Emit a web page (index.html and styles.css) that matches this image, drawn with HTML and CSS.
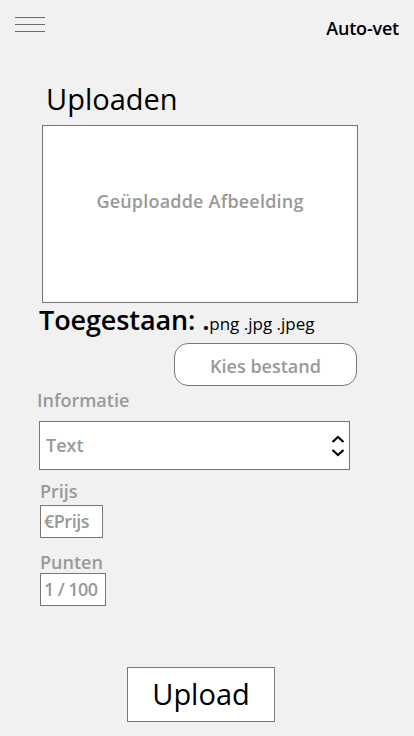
FILE: index.html
```html
<!DOCTYPE html>
<html lang="nl">
<head>
<meta charset="utf-8">
<title>Auto-vet</title>
<link rel="stylesheet" href="styles.css">
</head>
<body>
<header class="topbar">
  <div class="hamburger"><span></span><span></span><span></span></div>
  <div class="brand">Auto-vet</div>
</header>
<main class="page">
  <h1 class="title">Uploaden</h1>
  <div class="preview">Geüploadde Afbeelding</div>
  <p class="allowed"><span class="allowed-label">Toegestaan:</span> <span class="allowed-types"><b class="dot">.</b>png .jpg .jpeg</span></p>
  <button class="choose">Kies bestand</button>
  <div class="label label-info">Informatie</div>
  <div class="select">
    <span class="select-text">Text</span>
    <svg class="chevrons" width="14" height="22" viewBox="0 0 14 22">
      <path d="M1.5 7 L7 2 L12.5 7" fill="none" stroke="#000" stroke-width="2.2"/>
      <path d="M1.5 15 L7 20 L12.5 15" fill="none" stroke="#000" stroke-width="2.2"/>
    </svg>
  </div>
  <div class="label label-small">Prijs</div>
  <div class="input input-prijs">€Prijs</div>
  <div class="label label-small label-punten">Punten</div>
  <div class="input input-punten">1 / 100</div>
  <button class="upload">Upload</button>
</main>
</body>
</html>
```
FILE: styles.css
```css
* { box-sizing: border-box; }
html, body { margin: 0; padding: 0; }
body {
  background: #f1f1f1;
  font-family: "Open Sans", "Noto Sans", sans-serif;
  color: #000;
  width: 414px;
  height: 736px;
  overflow: hidden;
}
.topbar {
  display: flex;
  justify-content: space-between;
  align-items: flex-start;
  padding: 17px 15px 0 15px;
  height: 37px;
}
.hamburger {
  width: 30px;
  height: 15px;
  display: flex;
  flex-direction: column;
  justify-content: space-between;
}
.hamburger span {
  display: block;
  height: 1px;
  background: #6a6a6a;
}
.brand {
  font-size: 18px;
  font-weight: 600;
  line-height: 20px;
  letter-spacing: -0.2px;
  margin-top: 1px;
}
.page {
  display: flex;
  flex-direction: column;
  align-items: flex-start;
}
.title {
  margin: 45px 0 0 46px;
  font-size: 29px;
  font-weight: 400;
  line-height: 34px;
}
.preview {
  margin: 9px 0 0 42px;
  width: 316px;
  height: 178px;
  background: #fff;
  border: 1px solid #777;
  display: flex;
  align-items: center;
  justify-content: center;
  color: #999;
  font-size: 18px;
  font-weight: 600;
  letter-spacing: 0.2px;
  padding-bottom: 26px;
}
.allowed {
  margin: 2px 0 0 39px;
  height: 30px;
  line-height: 30px;
  white-space: nowrap;
  display: flex;
  align-items: baseline;
  gap: 7px;
}
.allowed-label {
  font-size: 27px;
  font-weight: 600;
  letter-spacing: -0.1px;
}
.allowed-types {
  font-size: 17px;
  font-weight: 400;
}
.dot { font-size: 24px; font-weight: 700; line-height: 0; }
.choose {
  margin: 8px 0 0 174px;
  width: 183px;
  height: 43px;
  border: 1px solid #777;
  border-radius: 14px;
  background: #fff;
  color: #999;
  font-family: inherit;
  font-size: 18px;
  font-weight: 600;
  padding: 3px 0 0 0;
}
.label {
  color: #999;
  font-size: 18px;
  font-weight: 600;
}
.label-info {
  margin: 2px 0 0 37px;
  line-height: 24px;
}
.select {
  margin: 9px 0 0 39px;
  width: 311px;
  height: 49px;
  background: #fff;
  border: 1px solid #777;
  display: flex;
  align-items: center;
  justify-content: space-between;
  padding: 0 4px 0 6px;
}
.select-text {
  color: #999;
  font-size: 18px;
  font-weight: 600;
  margin-top: -2px;
}
.chevrons { margin-top: 1px; }
.label-small {
  margin: 10px 0 0 40px;
  line-height: 22px;
}
.label-punten { margin-top: 13px; }
.input {
  margin: 3px 0 0 40px;
  height: 33px;
  background: #fff;
  border: 1px solid #777;
  color: #999;
  font-size: 18px;
  font-weight: 600;
  line-height: 31px;
  padding: 0 0 0 3px;
  white-space: nowrap;
  overflow: hidden;
}
.input-prijs { width: 63px; letter-spacing: -0.5px; }
.input-punten { width: 66px; margin-top: 0; letter-spacing: -0.6px; }
.upload {
  margin: 61px 0 0 127px;
  width: 148px;
  height: 55px;
  background: #fff;
  border: 1px solid #777;
  font-family: inherit;
  font-size: 29px;
  font-weight: 400;
  color: #000;
  padding: 0 0 2px 0;
}
```
